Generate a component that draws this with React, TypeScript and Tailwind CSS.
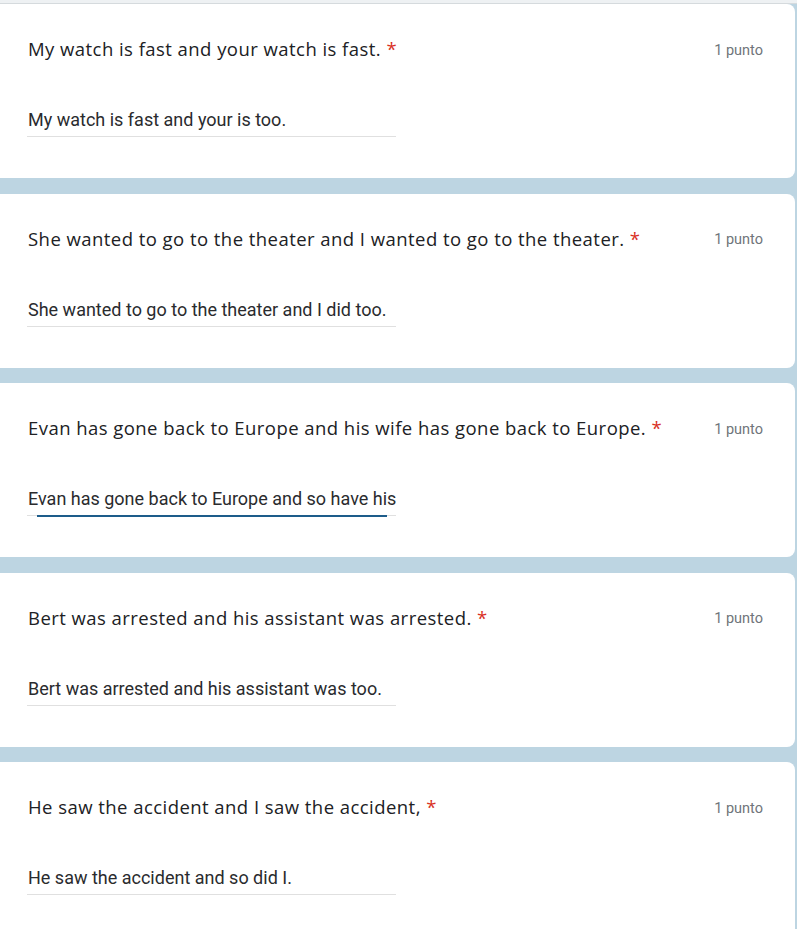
import React from "react";

const items = [
  { q: "My watch is fast and your watch is fast.", a: "My watch is fast and your is too." },
  { q: "She wanted to go to the theater and I wanted to go to the theater.", a: "She wanted to go to the theater and I did too." },
  { q: "Evan has gone back to Europe and his wife has gone back to Europe.", a: "Evan has gone back to Europe and so have his", focus: true },
  { q: "Bert was arrested and his assistant was arrested.", a: "Bert was arrested and his assistant was too." },
  { q: "He saw the accident and I saw the accident,", a: "He saw the accident and so did I." },
];

export default function App() {
  return (
    <div className="w-[797px] h-[929px] overflow-hidden bg-[#bdd5e2]">
      <div className="h-[4px] bg-[#eef1f3] border-b border-[#d5dadd]" />
      <div className="flex flex-col gap-[15.5px] pr-[2px]">
        {items.map((it, i) => (
          <div
            key={i}
            className="ml-[-10px] h-[174px] shrink-0 bg-white rounded-lg pl-[38px] pr-[32px] pt-[33px]"
          >
            <div className="flex items-center justify-between h-[24px]">
              <div className="text-[18.5px] leading-[24px] text-[#202124] font-['Open_Sans',sans-serif] tracking-[0.45px] whitespace-nowrap">
                {it.q} <span className="text-[#d93025]">*</span>
              </div>
              <div className="mt-[3px] text-[14.5px] text-[#70757a] font-['Roboto',sans-serif]">1 punto</div>
            </div>
            <div className="relative mt-[47px] w-[369px] ml-[-1px] pl-[1px] border-b border-[#e0e0e0] pb-[4px]">
              <div className="text-[18px] leading-[24px] text-[#2a2b2e] font-['Roboto',sans-serif] whitespace-nowrap">{it.a}</div>
              {it.focus && (
                <div className="absolute left-[10px] right-[9px] bottom-[-2px] h-[2px] bg-[#1d5c8a]" />
              )}
            </div>
          </div>
        ))}
      </div>
    </div>
  );
}
